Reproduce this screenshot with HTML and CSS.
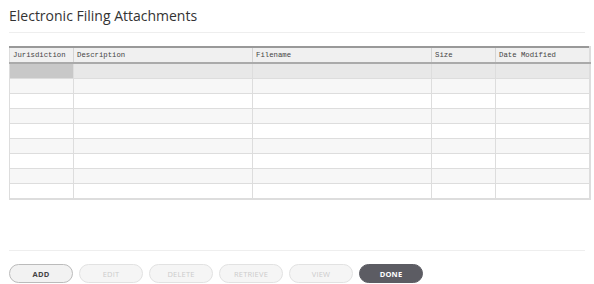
FILE: index.html
```html
<!DOCTYPE html>
<html lang="en">
<head>
    <meta charset="UTF-8">
    <title>Electronic Filing Attachments</title>
    <link rel="stylesheet" href="styles.css">
</head>
<body>
<div class="page">
    <h1 class="title">Electronic Filing Attachments</h1>
    <div class="rule"></div>

    <table class="grid">
        <thead>
            <tr>
                <th class="c-jur">Jurisdiction</th>
                <th class="c-desc">Description</th>
                <th class="c-file">Filename</th>
                <th class="c-size">Size</th>
                <th class="c-date">Date Modified</th>
            </tr>
        </thead>
        <tbody>
            <tr class="selected"><td class="lead"></td><td></td><td></td><td></td><td></td></tr>
            <tr><td></td><td></td><td></td><td></td><td></td></tr>
            <tr><td></td><td></td><td></td><td></td><td></td></tr>
            <tr><td></td><td></td><td></td><td></td><td></td></tr>
            <tr><td></td><td></td><td></td><td></td><td></td></tr>
            <tr><td></td><td></td><td></td><td></td><td></td></tr>
            <tr><td></td><td></td><td></td><td></td><td></td></tr>
            <tr><td></td><td></td><td></td><td></td><td></td></tr>
            <tr><td></td><td></td><td></td><td></td><td></td></tr>
        </tbody>
    </table>

    <div class="rule bottom"></div>

    <div class="actions">
        <button class="btn">ADD</button>
        <button class="btn" disabled>EDIT</button>
        <button class="btn" disabled>DELETE</button>
        <button class="btn" disabled>RETRIEVE</button>
        <button class="btn" disabled>VIEW</button>
        <button class="btn primary">DONE</button>
    </div>
</div>
</body>
</html>
```

FILE: styles.css
```css
body {
    margin: 0;
    padding: 0;
    background-color: #ffffff;
    font-family: "Open Sans", Arial, sans-serif;
}

.page {
    padding: 0 3px 0 9px;
}

.title {
    margin: 0;
    padding-top: 6px;
    font-size: 14px;
    font-weight: normal;
    line-height: 20px;
    color: #333333;
}

.rule {
    height: 1px;
    background-color: #eeeeee;
    margin: 6px 6px 0 0;
}

.rule.bottom {
    margin-top: 50px;
}

.grid {
    margin-top: 13px;
    width: 582px;
    border-collapse: collapse;
    table-layout: fixed;
    border-top: 2px solid #999999;
    border-left: 1px solid #dddddd;
    border-right: 2px solid #dddddd;
    border-bottom: 2px solid #dddddd;
}

.grid th {
    height: 14px;
    padding: 0 3px;
    text-align: left;
    font-family: "Liberation Mono", "Courier New", monospace;
    font-size: 7.3px;
    font-weight: normal;
    color: #444444;
    background-color: #f0f0f0;
    border-right: 1px solid #d4d4d4;
    border-bottom: 2px solid #aaaaaa;
}

.grid td {
    height: 14px;
    padding: 0;
    border-right: 1px solid #dddddd;
    border-bottom: 1px solid #dddddd;
}

.grid tbody tr:nth-child(even) td {
    background-color: #f7f7f7;
}

.grid tr.selected td {
    background-color: #e8e8e8;
}

.grid tr.selected td.lead {
    background-color: #c8c8c8;
}

.c-jur { width: 57px; }
.c-desc { width: 172px; }
.c-file { width: 172px; }
.c-size { width: 57px; }

.actions {
    display: flex;
    gap: 6px;
    margin-top: 13px;
}

.btn {
    width: 64px;
    height: 19px;
    padding: 0;
    border: 1px solid #bbbbbb;
    border-radius: 10px;
    background-color: #f2f2f2;
    color: #444444;
    font-family: "Open Sans", Arial, sans-serif;
    font-size: 7.5px;
    font-weight: bold;
    letter-spacing: 0.2px;
}

.btn:disabled {
    border-color: #e2e2e2;
    background-color: #f5f5f5;
    color: #cccccc;
    font-weight: normal;
}

.btn.primary {
    background-color: #5c5c63;
    border-color: #5c5c63;
    color: #ffffff;
}
```
